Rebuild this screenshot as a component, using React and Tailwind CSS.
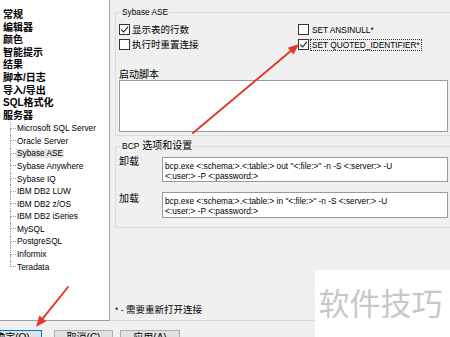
import React from "react";

function Check({ checked }) {
  return (
    <span className="flex h-[11px] w-[11px] shrink-0 items-center justify-center border border-[#333333] bg-white">
      {checked && (
        <svg width="9" height="9" viewBox="0 0 9 9">
          <path d="M1.2 4.6 L3.6 7 L7.9 1.8" fill="none" stroke="#1a1a1a" strokeWidth="1.1" />
        </svg>
      )}
    </span>
  );
}

function Arrow({ x1, y1, x2, y2 }) {
  const dx = x2 - x1;
  const dy = y2 - y1;
  const len = Math.hypot(dx, dy);
  const ux = dx / len;
  const uy = dy / len;
  const h = 11;
  const w = 4.5;
  const bx = x2 - ux * h;
  const by = y2 - uy * h;
  const px = -uy;
  const py = ux;
  const pts = `${x2},${y2} ${bx + px * w},${by + py * w} ${bx - px * w},${by - py * w}`;
  return (
    <g>
      <line x1={x1} y1={y1} x2={bx + ux} y2={by + uy} stroke="#e23b2e" strokeWidth="2" strokeLinecap="round" />
      <polygon points={pts} fill="#e23b2e" />
    </g>
  );
}

const bold = ["常规", "编辑器", "颜色", "智能提示", "结果", "脚本/日志", "导入/导出", "SQL格式化", "服务器"];
const subs = [
  "Microsoft SQL Server",
  "Oracle Server",
  "Sybase ASE",
  "Sybase Anywhere",
  "Sybase IQ",
  "IBM DB2 LUW",
  "IBM DB2 z/OS",
  "IBM DB2 iSeries",
  "MySQL",
  "PostgreSQL",
  "Informix",
  "Teradata",
];

export default function App() {
  return (
    <div className="relative h-[337px] w-[450px] overflow-hidden bg-[#f0f0f0] font-['Liberation_Sans','Noto_Sans_CJK_SC',sans-serif] text-black">
      <div className="flex h-[321px]">
        {/* Tree */}
        <div className="h-[321px] w-[110px] shrink-0 border-r border-b border-[#a0a0a0] bg-white pl-[3px] pt-[9px]">
          {bold.map((t) => (
            <div key={t} className="h-[12.6px] whitespace-nowrap text-[10px] font-bold leading-[12.6px]">
              {t}
            </div>
          ))}
          {subs.map((t, i) => (
            <div key={t} className="ml-[7px] flex h-[12.6px]">
              <div className="flex w-[6px] shrink-0 flex-col">
                <div className="h-1/2 border-b border-l border-dotted border-[#a0a0a0]" />
                <div
                  className={
                    i === subs.length - 1 ? "flex-1" : "flex-1 border-l border-dotted border-[#a0a0a0]"
                  }
                />
              </div>
              <div className="flex items-center">
                <span
                  className={
                    t === "Sybase ASE"
                      ? "whitespace-nowrap bg-[#e5e5e5] px-[1px] text-[8.3px] leading-[9px]"
                      : "whitespace-nowrap px-[1px] text-[8.3px] leading-[9px]"
                  }
                >
                  {t}
                </span>
              </div>
            </div>
          ))}
        </div>

        {/* Right panel */}
        <div className="flex min-w-0 flex-1 flex-col border-b border-[#d6d6d6] pl-[5px]">
          <fieldset className="mt-[7px] w-[345px] shrink-0 border border-[#dcdcdc] pb-[3px] pl-[3px]">
            <legend className="ml-[2px] px-[1px] text-[8.3px] leading-[11px]">Sybase ASE</legend>
            <div className="mt-[4px] flex">
              <div className="flex w-[179px] flex-col">
                <div className="flex h-[15px] items-center gap-[2px]">
                  <Check checked />
                  <span className="whitespace-nowrap text-[9.5px] leading-[11px]">显示表的行数</span>
                </div>
                <div className="flex h-[15px] items-center gap-[2px]">
                  <Check />
                  <span className="whitespace-nowrap text-[9.5px] leading-[11px]">执行时重置连接</span>
                </div>
              </div>
              <div className="flex flex-col">
                <div className="flex h-[15px] items-center gap-[1px]">
                  <Check />
                  <span className="whitespace-nowrap border border-transparent px-[1px] text-[8.3px] leading-[10px]">
                    SET ANSINULL*
                  </span>
                </div>
                <div className="flex h-[15px] items-center gap-[1px]">
                  <Check checked />
                  <span className="whitespace-nowrap border border-dotted border-[#333333] px-[1px] text-[8.3px] leading-[10px]">
                    SET QUOTED_IDENTIFIER*
                  </span>
                </div>
              </div>
            </div>
            <div className="mt-[18px] h-[10px] text-[10px] leading-[10px]">启动脚本</div>
            <div className="h-[52px] w-[329px] border border-[#9a9a9a] bg-white" />
          </fieldset>

          <fieldset className="mt-[4px] w-[345px] shrink-0 border border-[#dcdcdc] pb-[9px] pl-[3px]">
            <legend className="ml-[2px] px-[1px] text-[10px] leading-[12px]">
              <span className="text-[8.5px]">BCP</span> 选项和设置
            </legend>
            <div className="mt-[5px] flex">
              <div className="w-[43px] shrink-0 text-[10px] leading-[10px]">卸载</div>
              <div className="h-[25px] w-[286px] border border-[#9a9a9a] bg-white pl-[2px] pt-[3px] text-[8.3px] leading-[10px]">
                <div className="whitespace-nowrap">{'bcp.exe <:schema:>.<:table:> out "<:file:>" -n -S <:server:> -U'}</div>
                <div className="whitespace-nowrap">{"<:user:> -P <:password:>"}</div>
              </div>
            </div>
            <div className="mt-[10px] flex">
              <div className="w-[43px] shrink-0 pt-[2px] text-[10px] leading-[10px]">加载</div>
              <div className="h-[26px] w-[286px] border border-[#9a9a9a] bg-white pl-[2px] pt-[3px] text-[8.3px] leading-[10px]">
                <div className="whitespace-nowrap">{'bcp.exe <:schema:>.<:table:> in "<:file:>" -n -S <:server:> -U'}</div>
                <div className="whitespace-nowrap">{"<:user:> -P <:password:>"}</div>
              </div>
            </div>
          </fieldset>

          <div className="flex-1" />
          <div className="mb-[4px] h-[12px] whitespace-nowrap text-[9.5px] leading-[12px]">
            <span className="text-[8.5px]">* - </span>需要重新打开连接
          </div>
        </div>
      </div>

      {/* Buttons */}
      <div className="mt-[9px] flex">
        <div className="ml-[-17px] h-[23px] w-[59px] shrink-0 border border-[#0078d7] bg-[#e1e1e1] pt-[1px] text-center text-[10px] leading-[12px] whitespace-nowrap">
          确定(O)
        </div>
        <div className="ml-[12px] h-[23px] w-[59px] shrink-0 border border-[#adadad] bg-[#e1e1e1] pt-[1px] text-center text-[10px] leading-[12px] whitespace-nowrap">
          取消(C)
        </div>
        <div className="ml-[7px] h-[23px] w-[60px] shrink-0 border border-[#adadad] bg-[#e1e1e1] pt-[1px] text-center text-[10px] leading-[12px] whitespace-nowrap">
          应用(A)
        </div>
      </div>

      {/* Watermark overlay */}
      <div className="absolute left-[315px] top-[270px] flex h-[67px] w-[135px] items-center justify-center bg-white pb-[4px] pr-[4px]">
        <span className="whitespace-nowrap font-['Noto_Sans_CJK_SC',sans-serif] text-[31px] leading-none text-[#c8c8c8]">
          软件技巧
        </span>
      </div>

      {/* Arrows */}
      <svg className="pointer-events-none absolute left-0 top-0" width="450" height="337" viewBox="0 0 450 337">
        <Arrow x1={193} y1={133} x2={299} y2={44} />
        <Arrow x1={68} y1={287} x2={36} y2={327} />
      </svg>
    </div>
  );
}
